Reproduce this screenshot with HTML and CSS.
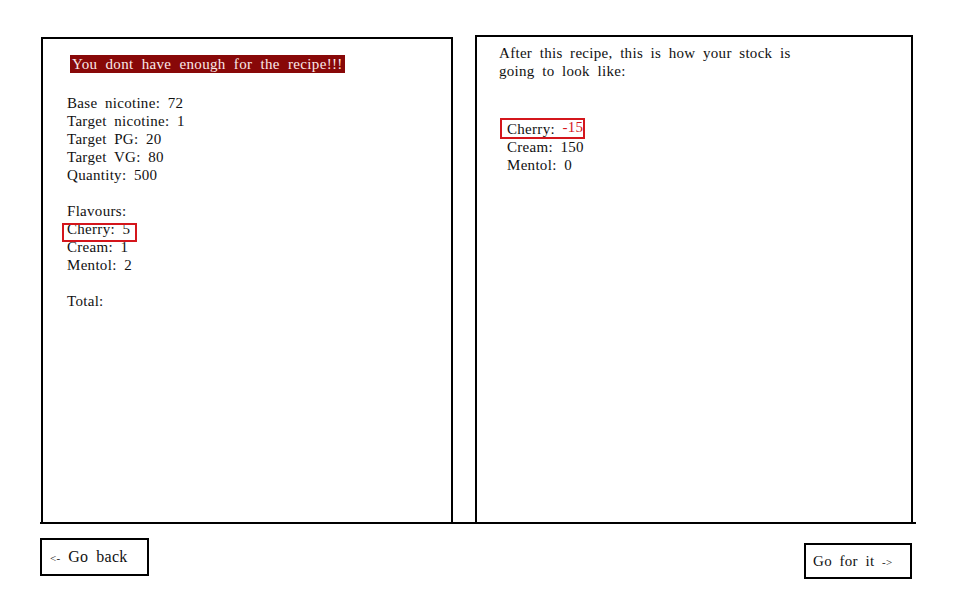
FILE: index.html
```html
<!DOCTYPE html>
<html>
<head>
<meta charset="utf-8">
<link rel="stylesheet" href="styles.css">
</head>
<body>
<div class="row">
  <section class="panel panel-left">
    <div class="alert">You dont have enough for the recipe!!!</div>
    <div class="lines">
      <div>Base nicotine: 72</div>
      <div>Target nicotine: 1</div>
      <div>Target PG: 20</div>
      <div>Target VG: 80</div>
      <div>Quantity: 500</div>
      <div class="blank"></div>
      <div>Flavours:</div>
      <div><span class="hl hl-left">Cherry: 5</span></div>
      <div>Cream: 1</div>
      <div>Mentol: 2</div>
      <div class="blank"></div>
      <div>Total:</div>
    </div>
  </section>
  <section class="panel panel-right">
    <p class="intro">After this recipe, this is how your stock is going to look like:</p>
    <div class="stock">
      <div><span class="hl hl-right">Cherry: <span class="neg">-15</span></span></div>
      <div>Cream: 150</div>
      <div>Mentol: 0</div>
    </div>
  </section>
</div>
<div class="footer">
  <div class="btn btn-back"><span class="arrow">&lt;-</span> Go back</div>
  <div class="btn btn-go">Go for it <span class="arrow">-&gt;</span></div>
</div>
</body>
</html>
```
FILE: styles.css
```css
html, body {
  margin: 0;
  padding: 0;
  background: #fff;
}
body {
  font-family: "Liberation Serif", "Times New Roman", serif;
  font-size: 15px;
  line-height: 18px;
  color: #111;
  letter-spacing: 0.3px;
  word-spacing: 3.5px;
}
.row {
  display: flex;
  margin: 35px 0 0 40px;
  width: 876px;
  height: 487px;
  border-bottom: 2px solid #000;
}
.panel {
  box-sizing: border-box;
  border: 2px solid #000;
  border-bottom: none;
}
.panel-left {
  margin: 2px 0 0 1px;
  width: 412px;
  padding: 16px 0 0 24px;
}
.panel-right {
  margin-left: 22px;
  width: 438px;
  padding: 7px 0 0 22px;
}
.alert {
  display: inline-block;
  margin-left: 3px;
  padding: 0 2px;
  height: 18px;
  background: #880808;
  color: #fbe9e9;
  letter-spacing: 0.35px;
  word-spacing: 4px;
}
.lines {
  margin-top: 21px;
}
.blank {
  height: 18px;
}
.hl {
  position: relative;
}
.hl::after {
  content: "";
  position: absolute;
  box-sizing: border-box;
  border: 2px solid #d4161c;
}
.hl-left::after {
  left: -5px;
  top: 2px;
  width: 75px;
  height: 19px;
}
.intro {
  margin: 0;
  width: 310px;
}
.stock {
  margin-top: 40px;
  padding-left: 8px;
}
.hl-right::after {
  left: -7px;
  top: -3px;
  width: 85px;
  height: 21px;
}
.neg {
  color: #d4161c;
  position: relative;
  top: -2px;
}
.footer {
  display: flex;
  justify-content: space-between;
  align-items: flex-start;
  margin-left: 40px;
  width: 872px;
}
.btn {
  box-sizing: border-box;
  border: 2px solid #000;
  line-height: 34px;
}
.btn-back {
  margin-top: 14px;
  width: 109px;
  height: 38px;
  padding-left: 8px;
  font-size: 16px;
}
.btn-go {
  margin-top: 19px;
  width: 108px;
  height: 36px;
  line-height: 32px;
  padding-left: 7px;
}
.arrow {
  font-size: 11px;
}
```
